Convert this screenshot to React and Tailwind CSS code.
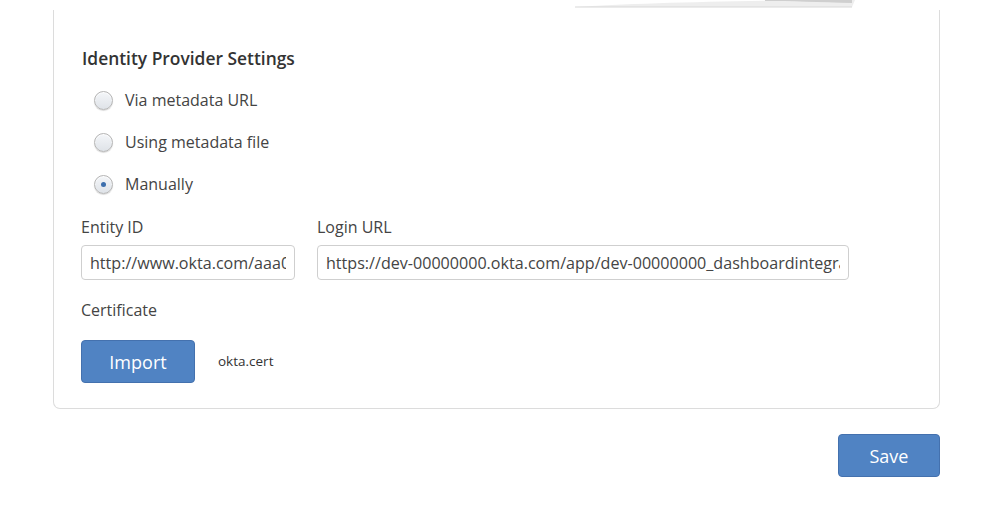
import React from "react";

const Radio = ({ label, checked }) => (
   <label className="flex h-[42px] items-center gap-[12px] pl-[13px]">
      <span className="relative flex h-[19px] w-[19px] items-center justify-center rounded-full border border-[#b5b5b5] bg-gradient-to-b from-[#f4f6f9] to-[#dfe3e8] shadow-[inset_0_1px_1px_rgba(255,255,255,0.9),0_1px_1px_rgba(0,0,0,0.15)]">
         {checked && <span className="h-[5px] w-[5px] rounded-full bg-[#3d6fad]" />}
      </span>
      <span className="text-[16px] text-[#444]">{label}</span>
   </label>
);

const Field = ({ label, value, width }) => (
   <div className="flex flex-col">
      <span className="h-[30px] pt-[2px] text-[16px] leading-[20px] text-[#444]">{label}</span>
      <input
         readOnly
         value={value}
         className={`${width} h-[35px] rounded-[4px] border border-[#cfcfcf] px-[8px] text-[16.1px] text-[#444] outline-none`}
      />
   </div>
);

export default function App() {
   return (
      <div className="relative h-[529px] w-[993px] overflow-hidden bg-white font-['Open_Sans',sans-serif]">
         {/* shadow of a popover above the panel */}
         <svg className="absolute left-[575px] top-0" width="285" height="10" viewBox="0 0 285 10">
            <path d="M0 7 C 60 3, 175 0, 277 0 L 280 0 L 277 7 Z" fill="#eeeeee" />
            <path d="M190 0 L 277 0 L 277 3 C 245 2, 215 1, 190 1 Z" fill="#cfcfcf" />
            <path d="M0 7 L 277 7" stroke="#d8d8d8" strokeWidth="1" />
         </svg>

         <div className="mx-[53px] mt-[10px] h-[399px] rounded-b-[7px] border border-t-0 border-[#dcdcdc] pl-[27px] pt-[36px]">
            <h3 className="pl-[1px] text-[17.4px] font-semibold leading-[24px] text-[#333]">
               Identity Provider Settings
            </h3>
            <div className="mt-[9px] flex flex-col">
               <Radio label="Via metadata URL" />
               <Radio label="Using metadata file" />
               <Radio label="Manually" checked />
            </div>
            <div className="mt-[10px] flex gap-[22px]">
               <Field label="Entity ID" value="http://www.okta.com/aaa0000000000000000" width="w-[214px]" />
               <Field
                  label="Login URL"
                  value="https://dev-00000000.okta.com/app/dev-00000000_dashboardintegration_1/aaa0000000000000000/sso/saml"
                  width="w-[532px]"
               />
            </div>
            <div className="mt-[18px] text-[16px] leading-[24px] text-[#444]">Certificate</div>
            <div className="mt-[18px] flex items-center gap-[23px]">
               <button className="h-[43px] w-[114px] rounded-[4px] border border-[#4471ae] bg-[#5083c3] pt-[2px] text-[18px] text-white">
                  Import
               </button>
               <span className="text-[13.5px] text-[#333]">okta.cert</span>
            </div>
         </div>

         <div className="mr-[53px] mt-[25px] flex justify-end">
            <button className="h-[43px] w-[102px] rounded-[4px] border border-[#4471ae] bg-[#5083c3] pt-[2px] text-[18px] text-white">
               Save
            </button>
         </div>
      </div>
   );
}
